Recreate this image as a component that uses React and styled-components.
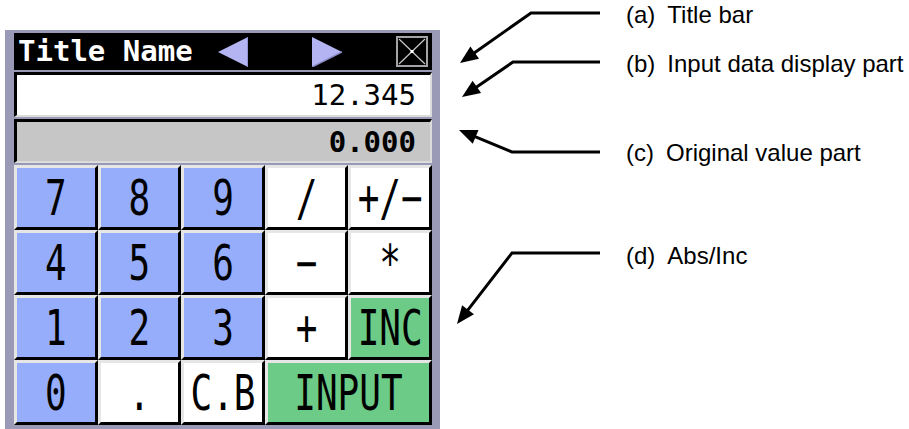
import React from "react";
import styled, { createGlobalStyle } from "styled-components";

const GlobalStyle = createGlobalStyle`
  html, body {
    margin: 0;
    padding: 0;
    background: #fff;
  }
  body {
    font-family: "Liberation Sans", Arial, sans-serif;
  }
`;

const Page = styled.div`
  position: relative;
  width: 909px;
  height: 429px;
  overflow: hidden;
  display: flex;
  align-items: flex-start;
`;

const Panel = styled.div`
  margin: 30px 0 0 5px;
  width: 435px;
  height: 410px;
  box-sizing: border-box;
  padding: 3px 8px 0 9px;
  background: #9a9ab6;
  display: flex;
  flex-direction: column;
  flex-shrink: 0;
`;

const TitleBar = styled.div`
  height: 37px;
  background: #000;
  display: flex;
  align-items: center;
  padding-left: 4px;
  font-family: "DejaVu Sans Mono", "Liberation Mono", monospace;
  font-size: 29px;
  font-weight: bold;
  color: #fff;
`;

const TitleText = styled.span`
  white-space: pre;
  line-height: 1;
`;

const Arrow = styled.svg`
  display: block;
  margin-left: ${(p) => p.$gap}px;
  flex-shrink: 0;
`;

const CloseBox = styled.div`
  margin-left: auto;
  margin-right: 4px;
  width: 32px;
  height: 31px;
  box-sizing: border-box;
  border: 2px solid #a4a4a4;
  background: #000;
  display: flex;
`;

const Readout = styled.div`
  margin-top: 2px;
  height: ${(p) => p.$h}px;
  box-sizing: border-box;
  border-top: 3px solid #000;
  border-left: 3px solid #000;
  border-right: 2px solid #dcdcdc;
  border-bottom: 2px solid #dcdcdc;
  background: ${(p) => (p.$original ? "#c6c6c6" : "#fff")};
  display: flex;
  align-items: center;
  justify-content: flex-end;
  padding-right: 14px;
  font-family: "DejaVu Sans Mono", "Liberation Mono", monospace;
  font-size: 29px;
  font-weight: ${(p) => (p.$original ? "bold" : "normal")};
  color: #000;
`;

const Keypad = styled.div`
  margin-top: 2px;
  display: grid;
  grid-template-columns: repeat(5, 1fr);
  grid-auto-rows: 65px;
`;

const keyColors = {
  num: "#95adfa",
  op: "#fff",
  go: "#6ccb86",
};

const Key = styled.div`
  grid-column: span ${(p) => p.$span || 1};
  box-sizing: border-box;
  border-top: 3px solid #e6e6e6;
  border-left: 3px solid #e6e6e6;
  border-right: 3px solid #000;
  border-bottom: 3px solid #000;
  background: ${(p) => keyColors[p.$kind]};
  display: flex;
  align-items: center;
  justify-content: center;
  font-family: "DejaVu Sans Mono", "Liberation Mono", monospace;
  font-size: 36px;
  color: #000;
`;

const KeyLabel = styled.span`
  display: inline-block;
  line-height: 1;
  transform: scaleY(1.38);
  white-space: pre;
`;

const Legend = styled.div`
  margin-left: 186px;
  display: flex;
  flex-direction: column;
`;

const Label = styled.div`
  margin-top: ${(p) => p.$top}px;
  height: 26px;
  line-height: 26px;
  font-family: "Liberation Sans", Arial, sans-serif;
  font-size: 24px;
  color: #000;
  display: flex;
  gap: 12px;
  white-space: nowrap;
`;

const Overlay = styled.svg`
  position: absolute;
  left: 0;
  top: 0;
  pointer-events: none;
`;

const keys = [
  { t: "7", k: "num" },
  { t: "8", k: "num" },
  { t: "9", k: "num" },
  { t: "/", k: "op" },
  { t: "+/\u2212", k: "op" },
  { t: "4", k: "num" },
  { t: "5", k: "num" },
  { t: "6", k: "num" },
  { t: "\u2212", k: "op" },
  { t: "*", k: "op" },
  { t: "1", k: "num" },
  { t: "2", k: "num" },
  { t: "3", k: "num" },
  { t: "+", k: "op" },
  { t: "INC", k: "go" },
  { t: "0", k: "num" },
  { t: ".", k: "op" },
  { t: "C.B", k: "op" },
  { t: "INPUT", k: "go", span: 2 },
];

const labels = [
  { tag: "(a)", text: "Title bar", top: 2 },
  { tag: "(b)", text: "Input data display part", top: 23 },
  { tag: "(c)", text: "Original value part", top: 63 },
  { tag: "(d)", text: "Abs/Inc", top: 77 },
];

const callouts = [
  { pts: [[600, 13], [531, 13]], tip: [460, 63] },
  { pts: [[600, 62], [513, 62]], tip: [462, 97] },
  { pts: [[600, 152], [512, 152]], tip: [459, 130] },
  { pts: [[600, 253], [512, 253]], tip: [457, 324] },
];

function arrowParts(from, tip, len = 18, half = 7.5) {
  const dx = tip[0] - from[0];
  const dy = tip[1] - from[1];
  const d = Math.hypot(dx, dy);
  const ux = dx / d;
  const uy = dy / d;
  const bx = tip[0] - ux * len;
  const by = tip[1] - uy * len;
  const head = [
    [tip[0], tip[1]],
    [bx - uy * half, by + ux * half],
    [bx + uy * half, by - ux * half],
  ];
  return { base: [bx + ux * 2, by + uy * 2], head };
}

function Callouts() {
  return (
    <Overlay width="909" height="429" viewBox="0 0 909 429">
      {callouts.map((c, i) => {
        const last = c.pts[c.pts.length - 1];
        const { base, head } = arrowParts(last, c.tip);
        const line = [...c.pts, base].map((p) => p.join(",")).join(" ");
        return (
          <g key={i}>
            <polyline points={line} fill="none" stroke="#000" strokeWidth="3" />
            <polygon points={head.map((p) => p.join(",")).join(" ")} fill="#000" />
          </g>
        );
      })}
    </Overlay>
  );
}

function Triangle({ dir, gap }) {
  const pts = dir === "left" ? "30,0 30,30 0,15" : "0,0 0,30 30,15";
  return (
    <Arrow $gap={gap} width="30" height="30" viewBox="0 0 30 30">
      <polygon points={pts} fill="#b4b4f2" />
      <polyline
        points={dir === "left" ? "30,0 30,30" : "0,30 30,15"}
        stroke="#8a8ac8"
        strokeWidth="1.5"
        fill="none"
      />
    </Arrow>
  );
}

function Close() {
  return (
    <CloseBox>
      <svg width="28" height="27" viewBox="0 0 28 27">
        <line x1="1" y1="1" x2="27" y2="26" stroke="#c8c8c8" strokeWidth="1.2" />
        <line x1="27" y1="1" x2="1" y2="26" stroke="#c8c8c8" strokeWidth="1.2" />
        <rect x="12.5" y="12" width="3" height="3" fill="#fff" />
      </svg>
    </CloseBox>
  );
}

function Calculator() {
  return (
    <Panel>
      <TitleBar>
        <TitleText>Title Name</TitleText>
        <Triangle dir="left" gap={25} />
        <Triangle dir="right" gap={64} />
        <Close />
      </TitleBar>
      <Readout $h={45}>12.345</Readout>
      <Readout $h={44} $original>
        0.000
      </Readout>
      <Keypad>
        {keys.map((key) => (
          <Key key={key.t} $kind={key.k} $span={key.span}>
            <KeyLabel>{key.t}</KeyLabel>
          </Key>
        ))}
      </Keypad>
    </Panel>
  );
}

export default function App() {
  return (
    <>
      <GlobalStyle />
      <Page>
        <Calculator />
        <Legend>
          {labels.map((l) => (
            <Label key={l.tag} $top={l.top}>
              <span>{l.tag}</span>
              <span>{l.text}</span>
            </Label>
          ))}
        </Legend>
        <Callouts />
      </Page>
    </>
  );
}
